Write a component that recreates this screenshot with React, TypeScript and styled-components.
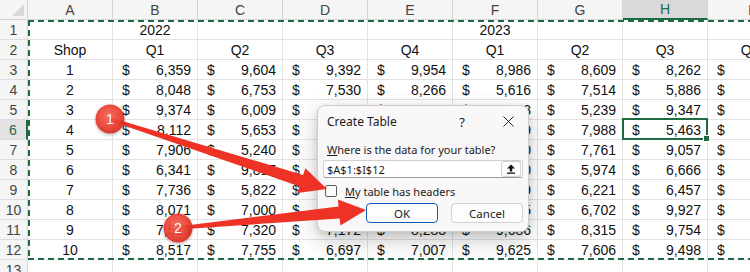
import React from 'react'
import styled, { createGlobalStyle } from 'styled-components'

const GlobalStyle = createGlobalStyle`
  html, body {
    margin: 0;
    padding: 0;
    background: #fff;
    overflow: hidden;
  }
`

const GREEN = '#1e6b43'
const RED = '#ee3326'

const Page = styled.div`
  position: relative;
  width: 750px;
  height: 272px;
  overflow: hidden;
  background: #fff;
  display: grid;
  font-family: 'Liberation Sans', Arial, sans-serif;
  font-size: 14px;
  color: #111;
`

const SheetGrid = styled.div`
  grid-area: 1 / 1;
  display: grid;
  grid-template-columns: 28px repeat(9, 85px);
  grid-template-rows: repeat(14, 20px);
`

const OverlayGrid = styled(SheetGrid)`
  pointer-events: none;
  z-index: 1;
`

const Corner = styled.div`
  box-sizing: border-box;
  background: #f5f5f5;
  border-right: 1px solid #d4d4d4;
  border-bottom: 1px solid #d4d4d4;
  display: flex;
  align-items: flex-end;
  justify-content: flex-end;
  padding: 0 3px 3px 0;

  &::after {
    content: '';
    width: 0;
    height: 0;
    border-left: 12px solid transparent;
    border-bottom: 12px solid #d9d9d9;
  }
`

const ColHead = styled.div<{ $active?: boolean }>`
  box-sizing: border-box;
  background: ${p => (p.$active ? '#d9d9d9' : '#f5f5f5')};
  color: ${p => (p.$active ? GREEN : '#444')};
  border-right: 1px solid #d4d4d4;
  border-bottom: ${p => (p.$active ? `2px solid ${GREEN}` : '1px solid #d4d4d4')};
  display: flex;
  align-items: center;
  justify-content: center;
`

const RowHead = styled.div<{ $active?: boolean }>`
  box-sizing: border-box;
  background: ${p => (p.$active ? '#e3e3e3' : '#f5f5f5')};
  color: ${p => (p.$active ? GREEN : '#444')};
  border-right: ${p => (p.$active ? `2px solid ${GREEN}` : '1px solid #d4d4d4')};
  border-bottom: 1px solid #dcdcdc;
  display: flex;
  align-items: center;
  justify-content: center;
`

const Cell = styled.div<{ $kind?: 'center' | 'acct' }>`
  box-sizing: border-box;
  border-right: 1px solid #e2e2e2;
  border-bottom: 1px solid #e2e2e2;
  display: flex;
  align-items: center;
  justify-content: ${p => (p.$kind === 'acct' ? 'space-between' : 'center')};
  padding: ${p => (p.$kind === 'acct' ? '0 6px 0 9px' : '0')};
  white-space: nowrap;
`

const Ants = styled.div`
  grid-column: 2 / 11;
  grid-row: 2 / 14;
  background-image:
    repeating-linear-gradient(90deg, ${GREEN} 0 6px, transparent 6px 10px),
    repeating-linear-gradient(90deg, ${GREEN} 0 6px, transparent 6px 10px),
    repeating-linear-gradient(180deg, ${GREEN} 0 6px, transparent 6px 10px);
  background-size: 100% 2px, 100% 2px, 2px 100%;
  background-position: 0 0, 0 100%, 0 0;
  background-repeat: no-repeat;
`

const Selection = styled.div`
  grid-column: 9;
  grid-row: 7;
  position: relative;
  margin: -2px 0 0 -1px;
  border: 2px solid ${GREEN};

  &::after {
    content: '';
    position: absolute;
    right: -4px;
    bottom: -4px;
    width: 5px;
    height: 5px;
    background: ${GREEN};
    border: 1px solid #fff;
  }
`

/* ---------- dialog ---------- */

const Dialog = styled.div`
  position: absolute;
  left: 317px;
  top: 105px;
  width: 212px;
  height: 127px;
  box-sizing: border-box;
  z-index: 2;
  background: #f9f7f8;
  border: 1px solid #cdcdcd;
  border-radius: 8px;
  box-shadow: 0 8px 22px rgba(0, 0, 0, 0.22), 0 2px 6px rgba(0, 0, 0, 0.1);
  font-family: 'Noto Sans', 'Segoe UI', sans-serif;
  font-size: 11px;
  color: #1b1b1b;
  display: flex;
  flex-direction: column;
  padding: 0 5px 8px;
`

const TitleBar = styled.div`
  height: 31px;
  margin: 0 -5px;
  padding-left: 9px;
  display: flex;
  align-items: center;
`

const Title = styled.div`
  flex: 1;
  font-size: 12px;
`

const TitleButton = styled.div<{ $w: number; $gap?: number }>`
  width: ${p => p.$w}px;
  margin-right: ${p => p.$gap ?? 0}px;
  height: 31px;
  display: flex;
  align-items: center;
  justify-content: center;
  font-size: 13px;
`

const Prompt = styled.div`
  margin: 6px 0 0 4px;
  line-height: 14px;
`

const RangeBox = styled.div`
  margin-top: 3px;
  height: 18px;
  box-sizing: border-box;
  background: #fff;
  border: 1px solid #cfcfcf;
  border-bottom-color: #9a9a9a;
  border-radius: 3px;
  display: flex;
  align-items: center;
  padding: 0 1px 0 3px;
`

const RangeText = styled.div`
  flex: 1;
`

const CollapseBtn = styled.div`
  width: 20px;
  height: 16px;
  box-sizing: border-box;
  border: 1px solid #d0d0d0;
  border-radius: 3px;
  background: #fdfdfd;
  display: flex;
  align-items: center;
  justify-content: center;
`

const CheckRow = styled.div`
  margin-top: 6px;
  height: 14px;
  display: flex;
  align-items: center;
  gap: 8px;
  padding-left: 2px;
`

const CheckBox = styled.div`
  width: 12px;
  height: 12px;
  box-sizing: border-box;
  border: 1px solid #5c5c5c;
  border-radius: 2px;
  background: #fbfbfb;
`

const ButtonRow = styled.div`
  margin-top: 5px;
  display: flex;
  justify-content: flex-end;
  gap: 13px;
`

const Button = styled.div<{ $primary?: boolean }>`
  width: 72px;
  height: 20px;
  box-sizing: border-box;
  border-radius: 4px;
  background: #fdfdfd;
  border: ${p => (p.$primary ? '1.5px solid #0f5bb0' : '1px solid #d0d0d0')};
  display: flex;
  align-items: center;
  justify-content: center;
  font-size: 11.5px;
`

const ArrowLayer = styled.svg`
  position: absolute;
  left: 0;
  top: 0;
  z-index: 3;
  pointer-events: none;
`

/* ---------- data ---------- */

const topRow = ['', '2022', '', '', '', '2023', '', '', '']
const quarterRow = ['Shop', 'Q1', 'Q2', 'Q3', 'Q4', 'Q1', 'Q2', 'Q3', 'Q4']

const values: string[][] = [
  ['6,359', '9,604', '9,392', '9,954', '8,986', '8,609', '8,262', '9,127'],
  ['8,048', '6,753', '7,530', '8,266', '5,616', '7,514', '5,886', '6,034'],
  ['9,374', '6,009', '9,063', '8,157', '5,563', '5,239', '9,347', '7,412'],
  ['8,112', '5,653', '6,211', '8,460', '7,129', '7,988', '5,463', '8,581'],
  ['7,906', '5,240', '5,881', '6,343', '9,210', '7,761', '9,057', '6,920'],
  ['6,341', '9,817', '7,493', '6,108', '8,950', '5,974', '6,666', '9,305'],
  ['7,736', '5,822', '9,275', '5,904', '7,319', '6,221', '6,457', '5,718'],
  ['8,071', '7,000', '8,745', '6,512', '9,865', '6,702', '9,927', '8,143'],
  ['7,519', '7,320', '7,172', '8,283', '9,686', '8,315', '9,754', '7,266'],
  ['8,517', '7,755', '6,697', '7,007', '9,625', '7,606', '9,498', '6,851'],
]

const letters = ['A', 'B', 'C', 'D', 'E', 'F', 'G', 'H', 'I']

type Pt = [number, number]

// tapered arrow: thin at the tail, wide near the head
const arrowPoints = (tail: Pt, tip: Pt, head = 27, wing = 13, shaftEnd = 6, shaftStart = 1.5) => {
  const dx = tip[0] - tail[0]
  const dy = tip[1] - tail[1]
  const len = Math.hypot(dx, dy)
  const ux = dx / len
  const uy = dy / len
  const nx = -uy
  const ny = ux
  const bx = tip[0] - ux * head
  const by = tip[1] - uy * head
  const p = (x: number, y: number, k: number) => `${(x + nx * k).toFixed(1)},${(y + ny * k).toFixed(1)}`
  return [
    p(tail[0], tail[1], shaftStart),
    p(bx, by, shaftEnd),
    p(bx, by, wing),
    `${tip[0]},${tip[1]}`,
    p(bx, by, -wing),
    p(bx, by, -shaftEnd),
    p(tail[0], tail[1], -shaftStart),
  ].join(' ')
}

const Badge: React.FC<{ at: Pt; label: string }> = ({ at, label }) => (
  <g filter="url(#badgeShadow)" opacity={0.92}>
    <circle cx={at[0]} cy={at[1]} r={14.5} fill="url(#badgeFill)" />
    <text
      x={at[0]}
      y={at[1] + 5}
      textAnchor="middle"
      fill="#fff"
      fontFamily="'Liberation Sans', Arial, sans-serif"
      fontSize="14"
    >
      {label}
    </text>
  </g>
)

const App: React.FC = () => {
  const one: [Pt, Pt] = [[110, 119], [327, 189]]
  const two: [Pt, Pt] = [[178, 228], [366, 210]]

  return (
    <>
      <GlobalStyle />
      <Page>
        <SheetGrid>
          <Corner />
          {letters.map(l => (
            <ColHead key={l} $active={l === 'H'}>{l}</ColHead>
          ))}

          <RowHead>1</RowHead>
          {topRow.map((t, i) => (
            <Cell key={`t${i}`}>{t}</Cell>
          ))}

          <RowHead>2</RowHead>
          {quarterRow.map((t, i) => (
            <Cell key={`q${i}`}>{t}</Cell>
          ))}

          {values.map((row, r) => (
            <React.Fragment key={r}>
              <RowHead $active={r + 3 === 6}>{r + 3}</RowHead>
              <Cell>{r + 1}</Cell>
              {row.map((v, c) => (
                <Cell key={c} $kind="acct">
                  <span>$</span>
                  <span>{v}</span>
                </Cell>
              ))}
            </React.Fragment>
          ))}

          <RowHead>13</RowHead>
          {letters.map(l => (
            <Cell key={`e${l}`} />
          ))}
        </SheetGrid>

        <OverlayGrid>
          <Ants />
          <Selection />
        </OverlayGrid>

        <Dialog>
          <TitleBar>
            <Title>Create Table</Title>
            <TitleButton $w={26} $gap={13}>?</TitleButton>
            <TitleButton $w={40}>
              <svg width="11" height="11" viewBox="0 0 11 11">
                <path d="M0.5 0.5 L10.5 10.5 M10.5 0.5 L0.5 10.5" stroke="#222" strokeWidth="1" />
              </svg>
            </TitleButton>
          </TitleBar>
          <Prompt>
            <u>W</u>here is the data for your table?
          </Prompt>
          <RangeBox>
            <RangeText>$A$1:$I$12</RangeText>
            <CollapseBtn>
              <svg width="10" height="10" viewBox="0 0 10 10">
                <path d="M5 0.5 L9 4.5 L6.2 4.5 L6.2 7.5 L3.8 7.5 L3.8 4.5 L1 4.5 Z" fill="#111" />
                <rect x="1" y="8.5" width="8" height="1.3" fill="#111" />
              </svg>
            </CollapseBtn>
          </RangeBox>
          <CheckRow>
            <CheckBox />
            <span>
              <u>M</u>y table has headers
            </span>
          </CheckRow>
          <ButtonRow>
            <Button $primary>OK</Button>
            <Button>Cancel</Button>
          </ButtonRow>
        </Dialog>

        <ArrowLayer width="750" height="272" viewBox="0 0 750 272">
          <defs>
            <radialGradient id="badgeFill" cx="45%" cy="40%" r="60%">
              <stop offset="0%" stopColor="#f56656" />
              <stop offset="70%" stopColor="#e9392c" />
              <stop offset="100%" stopColor="#d22a1e" />
            </radialGradient>
            <filter id="badgeShadow" x="-50%" y="-50%" width="200%" height="200%">
              <feDropShadow dx="0" dy="1.5" stdDeviation="1.5" floodColor="#000" floodOpacity="0.3" />
            </filter>
          </defs>
          <polygon points={arrowPoints(one[0], one[1])} fill={RED} />
          <polygon points={arrowPoints(two[0], two[1])} fill={RED} />
          <Badge at={one[0]} label="1" />
          <Badge at={two[0]} label="2" />
        </ArrowLayer>
      </Page>
    </>
  )
}

export default App
